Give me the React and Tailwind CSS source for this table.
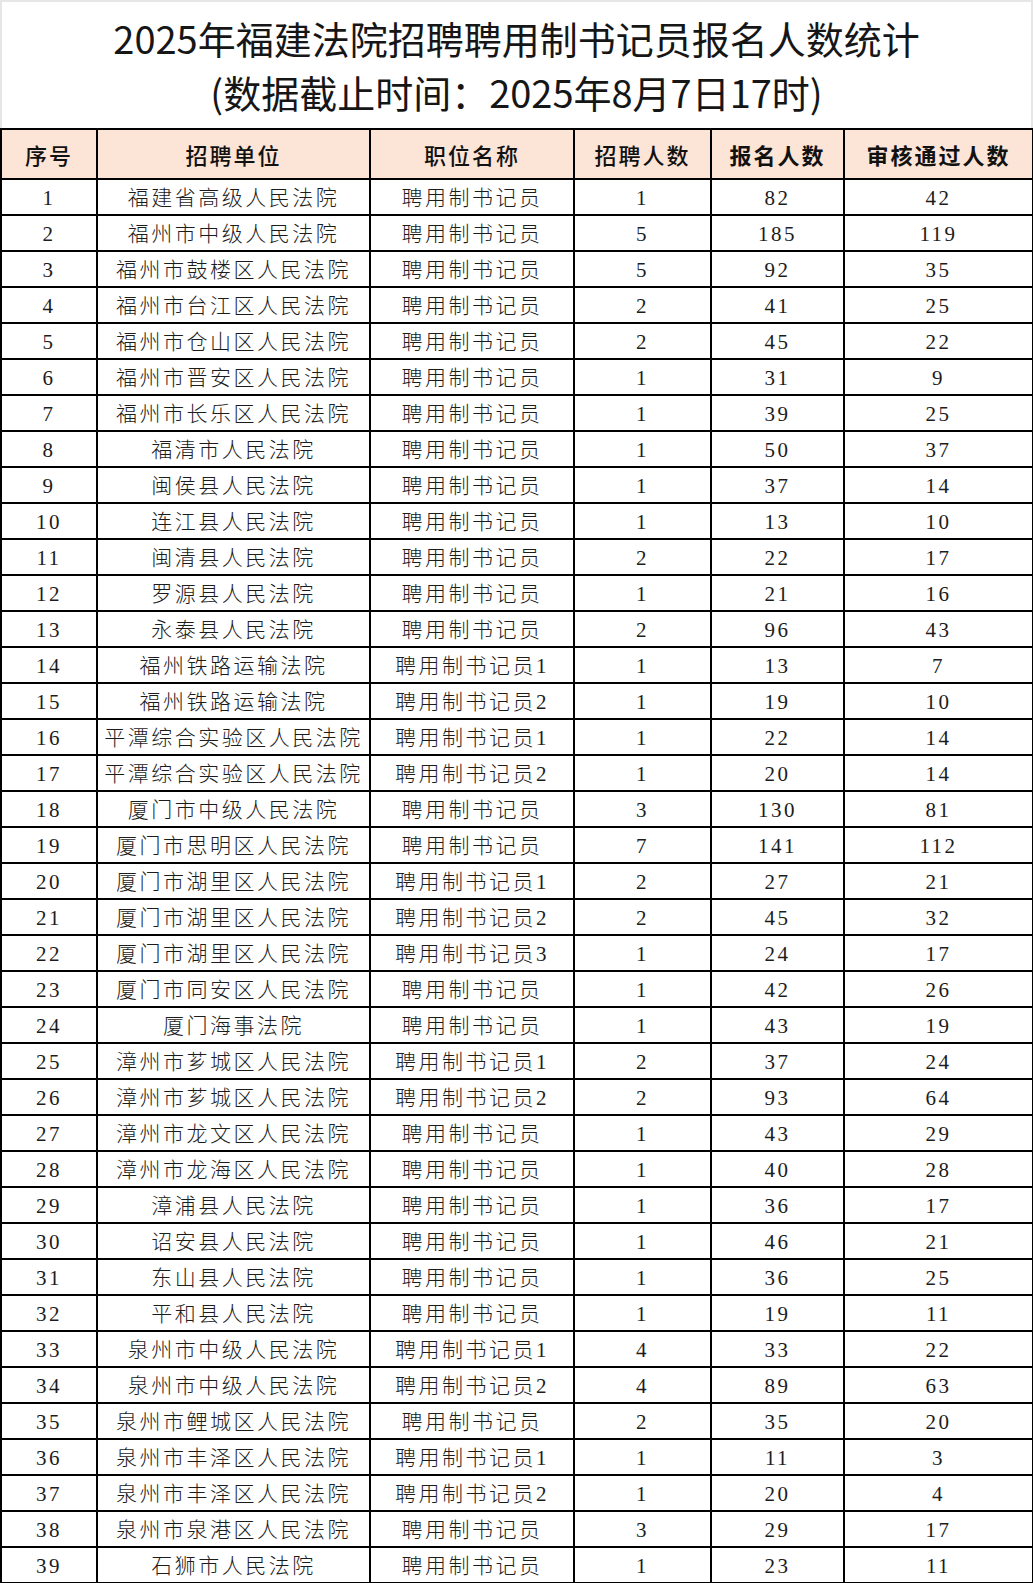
import React from "react";

const rows = [
  ["1", "福建省高级人民法院", "聘用制书记员", "1", "82", "42"],
  ["2", "福州市中级人民法院", "聘用制书记员", "5", "185", "119"],
  ["3", "福州市鼓楼区人民法院", "聘用制书记员", "5", "92", "35"],
  ["4", "福州市台江区人民法院", "聘用制书记员", "2", "41", "25"],
  ["5", "福州市仓山区人民法院", "聘用制书记员", "2", "45", "22"],
  ["6", "福州市晋安区人民法院", "聘用制书记员", "1", "31", "9"],
  ["7", "福州市长乐区人民法院", "聘用制书记员", "1", "39", "25"],
  ["8", "福清市人民法院", "聘用制书记员", "1", "50", "37"],
  ["9", "闽侯县人民法院", "聘用制书记员", "1", "37", "14"],
  ["10", "连江县人民法院", "聘用制书记员", "1", "13", "10"],
  ["11", "闽清县人民法院", "聘用制书记员", "2", "22", "17"],
  ["12", "罗源县人民法院", "聘用制书记员", "1", "21", "16"],
  ["13", "永泰县人民法院", "聘用制书记员", "2", "96", "43"],
  ["14", "福州铁路运输法院", "聘用制书记员1", "1", "13", "7"],
  ["15", "福州铁路运输法院", "聘用制书记员2", "1", "19", "10"],
  ["16", "平潭综合实验区人民法院", "聘用制书记员1", "1", "22", "14"],
  ["17", "平潭综合实验区人民法院", "聘用制书记员2", "1", "20", "14"],
  ["18", "厦门市中级人民法院", "聘用制书记员", "3", "130", "81"],
  ["19", "厦门市思明区人民法院", "聘用制书记员", "7", "141", "112"],
  ["20", "厦门市湖里区人民法院", "聘用制书记员1", "2", "27", "21"],
  ["21", "厦门市湖里区人民法院", "聘用制书记员2", "2", "45", "32"],
  ["22", "厦门市湖里区人民法院", "聘用制书记员3", "1", "24", "17"],
  ["23", "厦门市同安区人民法院", "聘用制书记员", "1", "42", "26"],
  ["24", "厦门海事法院", "聘用制书记员", "1", "43", "19"],
  ["25", "漳州市芗城区人民法院", "聘用制书记员1", "2", "37", "24"],
  ["26", "漳州市芗城区人民法院", "聘用制书记员2", "2", "93", "64"],
  ["27", "漳州市龙文区人民法院", "聘用制书记员", "1", "43", "29"],
  ["28", "漳州市龙海区人民法院", "聘用制书记员", "1", "40", "28"],
  ["29", "漳浦县人民法院", "聘用制书记员", "1", "36", "17"],
  ["30", "诏安县人民法院", "聘用制书记员", "1", "46", "21"],
  ["31", "东山县人民法院", "聘用制书记员", "1", "36", "25"],
  ["32", "平和县人民法院", "聘用制书记员", "1", "19", "11"],
  ["33", "泉州市中级人民法院", "聘用制书记员1", "4", "33", "22"],
  ["34", "泉州市中级人民法院", "聘用制书记员2", "4", "89", "63"],
  ["35", "泉州市鲤城区人民法院", "聘用制书记员", "2", "35", "20"],
  ["36", "泉州市丰泽区人民法院", "聘用制书记员1", "1", "11", "3"],
  ["37", "泉州市丰泽区人民法院", "聘用制书记员2", "1", "20", "4"],
  ["38", "泉州市泉港区人民法院", "聘用制书记员", "3", "29", "17"],
  ["39", "石狮市人民法院", "聘用制书记员", "1", "23", "11"],
];

const headers = [
  { label: "序号", bold: false },
  { label: "招聘单位", bold: false },
  { label: "职位名称", bold: false },
  { label: "招聘人数", bold: false },
  { label: "报名人数", bold: true },
  { label: "审核通过人数", bold: true },
];

const App = () => {
  return (
    <div className="w-[1033px] bg-white">
      <div className="h-[128px] border-t-2 border-l-2 border-r-2 border-[#e6e6e6] flex flex-col items-center justify-center font-['Noto_Sans_CJK_SC',sans-serif] text-[38px] leading-[54px] font-normal text-[#161616]">
        <div>2025年福建法院招聘聘用制书记员报名人数统计</div>
        <div>(数据截止时间：2025年8月7日17时)</div>
      </div>
      <table className="w-[1032px] table-fixed border-collapse border-2 border-black">
        <colgroup>
          <col className="w-[96px]" />
          <col className="w-[273px]" />
          <col className="w-[204px]" />
          <col className="w-[137px]" />
          <col className="w-[133px]" />
          <col className="w-[189px]" />
        </colgroup>
        <thead>
          <tr className="h-[50px] bg-[#fce4d6]">
            {headers.map((h) => (
              <th
                key={h.label}
                className={`border-2 border-black p-0 text-center font-['Noto_Sans_CJK_SC',sans-serif] text-[22px] tracking-[2px] text-[#111] ${
                  h.bold ? "font-bold" : "font-medium"
                }`}
              >
                {h.label}
              </th>
            ))}
          </tr>
        </thead>
        <tbody>
          {rows.map((row) => (
            <tr key={row[0]} className="h-[36px]">
              {row.map((cell, i) => (
                <td
                  key={i}
                  className="border-2 border-black p-0 pt-[2px] text-center whitespace-nowrap font-['Liberation_Serif','Noto_Sans_CJK_SC',serif] text-[21px] leading-[30px] tracking-[2.5px] font-light text-[#1c1c1c]"
                >
                  {cell}
                </td>
              ))}
            </tr>
          ))}
        </tbody>
      </table>
    </div>
  );
};

export default App;
